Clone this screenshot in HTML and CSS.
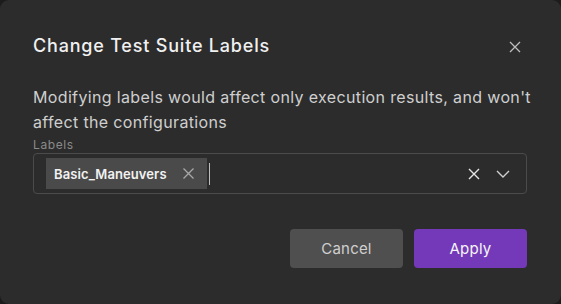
FILE: index.html
```html
<!DOCTYPE html>
<html>
<head>
<meta charset="utf-8">
<link rel="stylesheet" href="styles.css">
</head>
<body>
<div class="dialog">
  <div class="header">
    <h1 class="title">Change Test Suite Labels</h1>
    <button class="close" aria-label="Close">
      <svg width="12" height="12" viewBox="0 0 12 12"><path d="M1 1L11 11M11 1L1 11" stroke="#bdbdbd" stroke-width="1.3" fill="none"/></svg>
    </button>
  </div>
  <p class="desc">Modifying labels would affect only execution results, and won't affect the configurations</p>
  <div class="field-label">Labels</div>
  <div class="select">
    <span class="tag">
      <span class="tag-text">Basic_Maneuvers</span>
      <svg class="tag-x" width="11" height="11" viewBox="0 0 11 11"><path d="M0.5 0.5L10.5 10.5M10.5 0.5L0.5 10.5" stroke="#a8a8a8" stroke-width="1.3" fill="none"/></svg>
    </span>
    <span class="caret"></span>
    <span class="spacer"></span>
    <svg class="clear" width="12" height="12" viewBox="0 0 12 12"><path d="M1 1L11 11M11 1L1 11" stroke="#e6e6e6" stroke-width="1.4" fill="none"/></svg>
    <svg class="chev" width="14" height="8" viewBox="0 0 14 8"><path d="M1 1L7 7L13 1" stroke="#cfcfcf" stroke-width="1.4" fill="none"/></svg>
  </div>
  <div class="actions">
    <button class="btn btn-cancel">Cancel</button>
    <button class="btn btn-apply">Apply</button>
  </div>
</div>
</body>
</html>
```
FILE: styles.css
```css
html, body {
  margin: 0;
  padding: 0;
  background: #1c1c1c;
}
.dialog {
  width: 561px;
  height: 304px;
  box-sizing: border-box;
  background: #2c2c2c;
  border-radius: 9px;
  padding: 34px 34px 0 33px;
  font-family: Inter, "Noto Sans", sans-serif;
  color: #d6d6d6;
}
.header {
  display: flex;
  justify-content: space-between;
  align-items: center;
  height: 24px;
}
.title {
  margin: 0;
  font-size: 18px;
  font-weight: 500;
  line-height: 24px;
  color: #f0f0f0;
  letter-spacing: 0.8px;
}
.close {
  background: none;
  border: 0;
  padding: 0;
  margin-right: 6px;
  margin-top: 2px;
  display: flex;
}
.desc {
  margin: 27px -14px 0 0;
  font-size: 16px;
  line-height: 25px;
  color: #cfcfcf;
  letter-spacing: 0.35px;
}
.field-label {
  margin-top: 2px;
  font-size: 12px;
  line-height: 16px;
  color: #8a8a8a;
  letter-spacing: 0.6px;
}
.select {
  height: 41px;
  box-sizing: border-box;
  border: 1px solid #4b4b4b;
  border-radius: 4px;
  padding: 4px 16px 4px 12px;
  display: flex;
  align-items: center;
}
.tag {
  height: 31px;
  width: 161px;
  box-sizing: border-box;
  background: #4a4a4a;
  display: flex;
  align-items: center;
  padding: 0 13px 0 8px;
  justify-content: space-between;
}
.tag-text {
  font-size: 13px;
  font-weight: 600;
  color: #f2f2f2;
  letter-spacing: 0.1px;
}
.caret {
  width: 1px;
  height: 22px;
  margin-left: 2px;
  background: #bdbdbd;
}
.spacer {
  flex: 1;
}
.clear {
  margin-right: 16px;
}
.chev {
  margin-top: 1px;
}
.actions {
  display: flex;
  justify-content: flex-end;
  gap: 11px;
  margin-top: 35px;
}
.btn {
  width: 113px;
  height: 39px;
  border: 0;
  border-radius: 4px;
  font-family: Inter, "Noto Sans", sans-serif;
  font-size: 15px;
  letter-spacing: 0.2px;
  cursor: pointer;
}
.btn-cancel {
  background: #4f4f4f;
  color: #cfcfcf;
}
.btn-apply {
  background: #7439b9;
  color: #f5f5f5;
}
```
